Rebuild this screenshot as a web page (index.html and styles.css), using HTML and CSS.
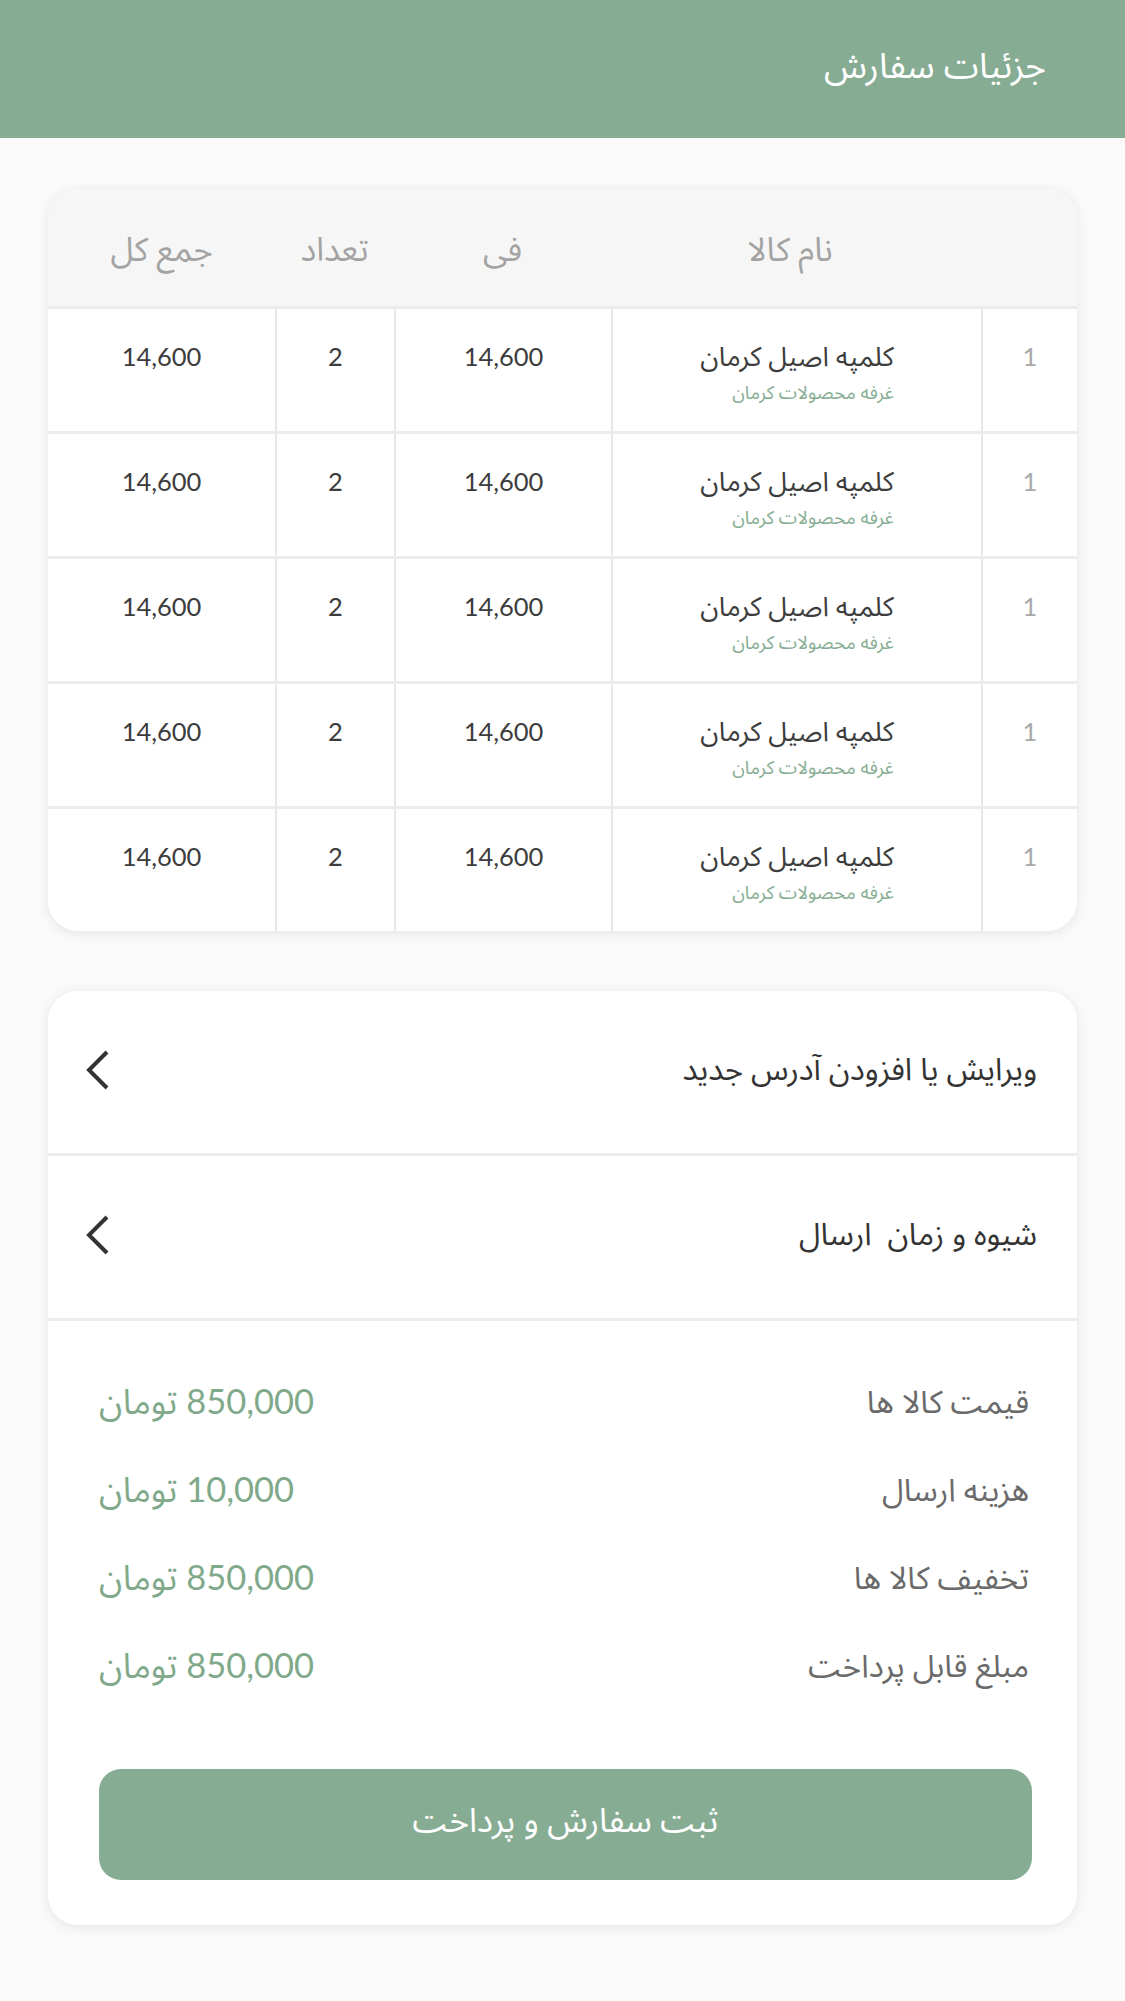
FILE: index.html
```html
<!DOCTYPE html>
<html lang="fa" dir="rtl">
<head>
<meta charset="utf-8">
<title>جزئیات سفارش</title>
<link rel="stylesheet" href="styles.css">
</head>
<body>
<header class="topbar"><h1 class="title">جزئیات سفارش</h1></header>
<main class="content">
  <section class="card table-card">
    <div class="thead">
      <div class="th"></div>
      <div class="th">نام کالا</div>
      <div class="th">فی</div>
      <div class="th">تعداد</div>
      <div class="th">جمع کل</div>
    </div>
    <div class="trow">
      <div class="td idx">1</div>
      <div class="td name"><div class="name-box"><div class="pname">کلمپه اصیل کرمان</div><div class="shop">غرفه محصولات کرمان</div></div></div>
      <div class="td">14,600</div>
      <div class="td">2</div>
      <div class="td">14,600</div>
    </div>
    <div class="trow">
      <div class="td idx">1</div>
      <div class="td name"><div class="name-box"><div class="pname">کلمپه اصیل کرمان</div><div class="shop">غرفه محصولات کرمان</div></div></div>
      <div class="td">14,600</div>
      <div class="td">2</div>
      <div class="td">14,600</div>
    </div>
    <div class="trow">
      <div class="td idx">1</div>
      <div class="td name"><div class="name-box"><div class="pname">کلمپه اصیل کرمان</div><div class="shop">غرفه محصولات کرمان</div></div></div>
      <div class="td">14,600</div>
      <div class="td">2</div>
      <div class="td">14,600</div>
    </div>
    <div class="trow">
      <div class="td idx">1</div>
      <div class="td name"><div class="name-box"><div class="pname">کلمپه اصیل کرمان</div><div class="shop">غرفه محصولات کرمان</div></div></div>
      <div class="td">14,600</div>
      <div class="td">2</div>
      <div class="td">14,600</div>
    </div>
    <div class="trow last">
      <div class="td idx">1</div>
      <div class="td name"><div class="name-box"><div class="pname">کلمپه اصیل کرمان</div><div class="shop">غرفه محصولات کرمان</div></div></div>
      <div class="td">14,600</div>
      <div class="td">2</div>
      <div class="td">14,600</div>
    </div>
  </section>

  <section class="card checkout-card">
    <div class="link-row">
      <span class="link-text">ویرایش یا افزودن آدرس جدید</span>
      <svg class="chev" width="26" height="42" viewBox="0 0 26 42"><polyline points="22,3 4,21 22,39" fill="none" stroke="#333" stroke-width="4"/></svg>
    </div>
    <div class="link-row">
      <span class="link-text">شیوه و زمان&nbsp; ارسال</span>
      <svg class="chev" width="26" height="42" viewBox="0 0 26 42"><polyline points="22,3 4,21 22,39" fill="none" stroke="#333" stroke-width="4"/></svg>
    </div>
    <div class="summary">
      <div class="sum-row"><span class="label">قیمت کالا ها</span><span class="value">850,000 تومان</span></div>
      <div class="sum-row"><span class="label">هزینه ارسال</span><span class="value">10,000 تومان</span></div>
      <div class="sum-row"><span class="label">تخفیف کالا ها</span><span class="value">850,000 تومان</span></div>
      <div class="sum-row"><span class="label">مبلغ قابل پرداخت</span><span class="value">850,000 تومان</span></div>
      <button class="pay-btn">ثبت سفارش و پرداخت</button>
    </div>
  </section>
</main>
</body>
</html>
```
FILE: styles.css
```css
* { box-sizing: border-box; }
html, body { margin: 0; padding: 0; }
body {
  background: #fafafa;
  font-family: "Lato", "Noto Sans Arabic", "Vazirmatn", "DejaVu Sans", sans-serif;
  color: #383838;
  width: 1125px;
  min-height: 2001px;
}
.topbar {
  background: #86ac93;
  height: 138px;
  display: flex;
  align-items: center;
  padding: 0 79px 6px 0;
}
.title {
  margin: 0;
  color: #fff;
  font-weight: normal;
  font-size: 35.5px;
}
.content {
  padding: 51px 48px 60px 48px;
  display: flex;
  flex-direction: column;
  gap: 60px;
}
.card {
  background: #fff;
  border-radius: 30px;
  box-shadow: 0 2px 12px rgba(0,0,0,0.09);
  overflow: hidden;
}
.thead, .trow {
  display: grid;
  grid-template-columns: 96px 370px 217px 119px 1fr;
}
.thead {
  height: 120px;
  background: #f6f6f6;
  border-bottom: 3px solid #ececec;
}
.th {
  display: flex;
  align-items: center;
  justify-content: center;
  color: #a3a3a3;
  font-size: 33px;
  padding-top: 6px;
}
.th:nth-child(2) { padding-right: 12px; }
.trow {
  height: 125px;
  border-bottom: 3px solid #ececec;
}
.trow.last { height: 122px; border-bottom: none; }
.td {
  border-left: 2px solid #e8e8e8;
  text-align: center;
  padding-top: 31px;
  font-size: 25.5px;
  line-height: 32px;
  color: #3c3c3c;
}
.td:last-child { border-left: none; }
.td.idx { color: #a8a8a8; }
.name-box {
  display: inline-block;
  text-align: right;
}
.pname { font-size: 27px; }
.shop {
  margin-top: 6px;
  font-size: 18.5px;
  line-height: 28px;
  color: #86ad93;
}
.link-row {
  height: 165px;
  display: flex;
  align-items: center;
  justify-content: space-between;
  padding: 0 40px 4px 37px;
  border-bottom: 3px solid #ececec;
}
.link-text { font-size: 31px; color: #333; }
.chev { display: block; }
.summary {
  padding: 38px 45px 45px 51px;
  display: flex;
  flex-direction: column;
}
.sum-row {
  height: 88px;
  display: flex;
  align-items: center;
  justify-content: space-between;
  padding-right: 3px;
}
.label { font-size: 31.5px; color: #6a6a6a; }
.value { font-size: 34.5px; color: #80a98b; }
.pay-btn {
  margin-top: 58px;
  height: 111px;
  width: 100%;
  border: none;
  border-radius: 22px;
  background: #86ac93;
  color: #fff;
  font-family: inherit;
  font-size: 33.5px;
  padding-bottom: 8px;
}
```
